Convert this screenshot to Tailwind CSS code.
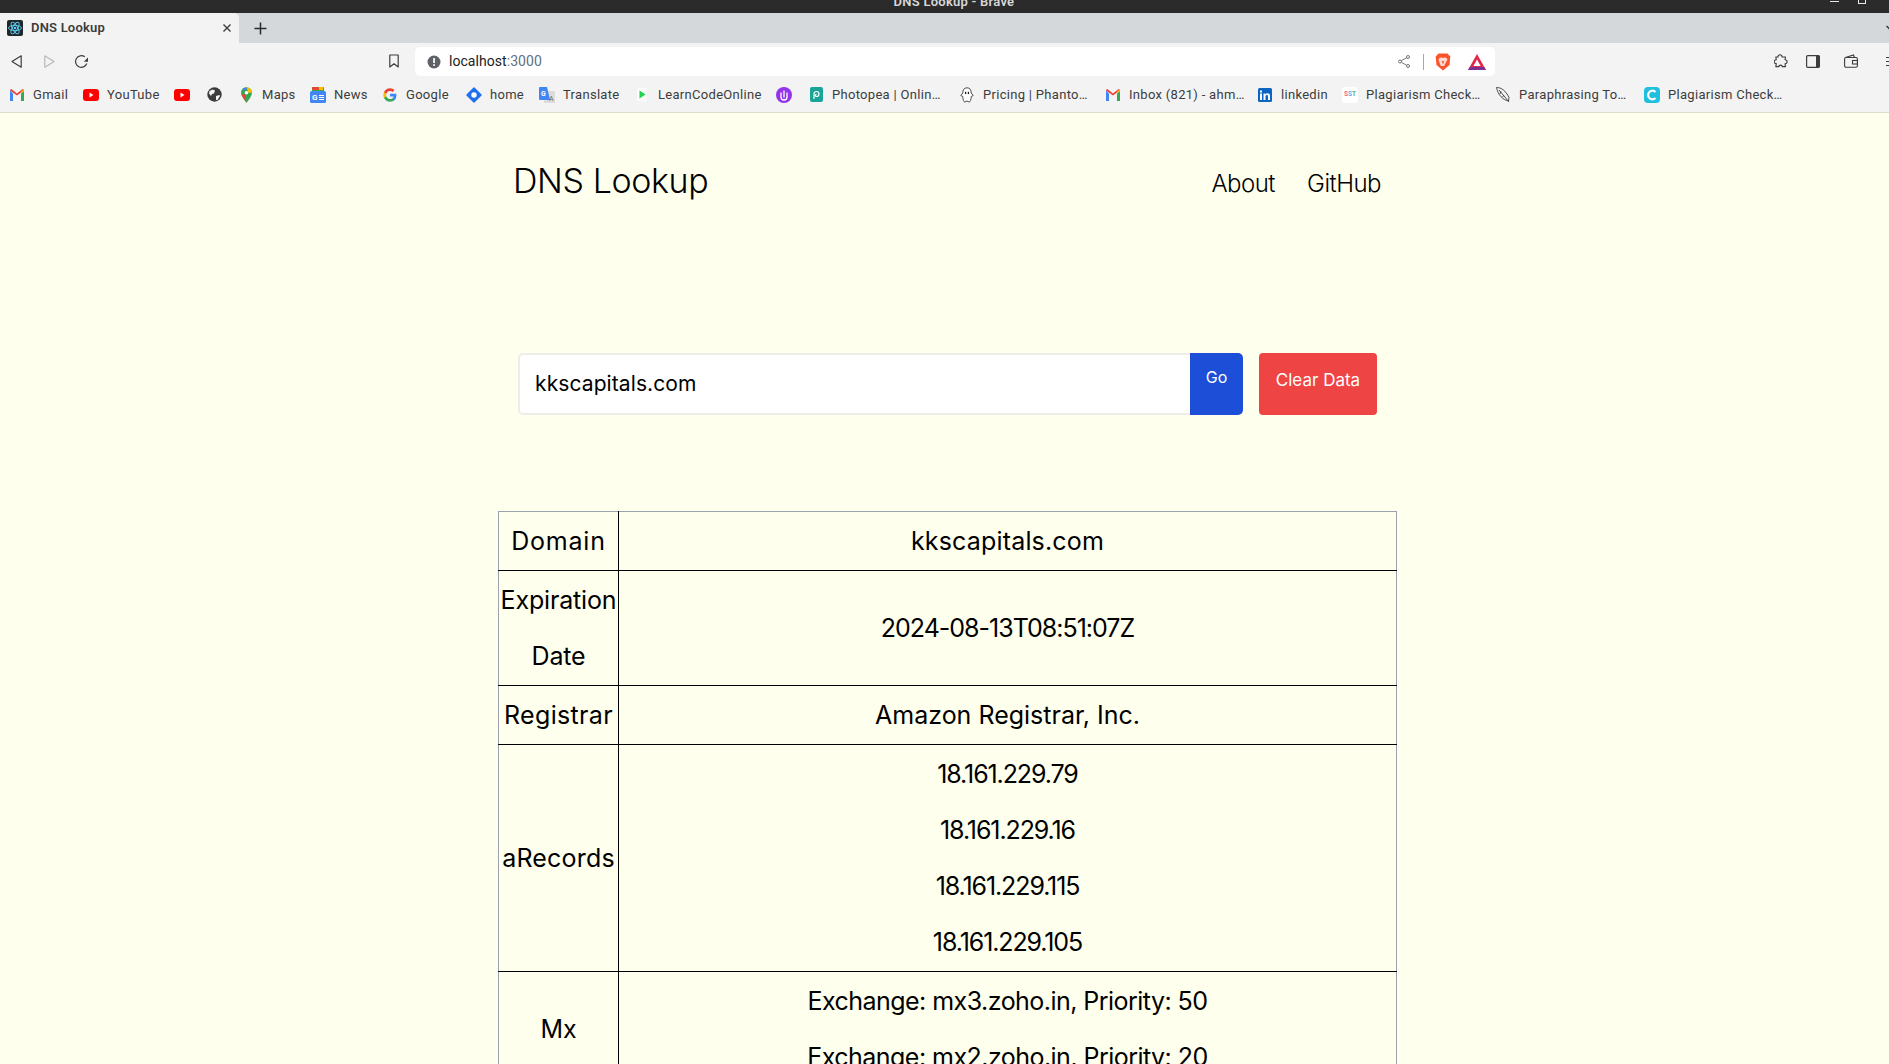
<!DOCTYPE html>
<html lang="en">
<head>
<meta charset="UTF-8">
<title>DNS Lookup</title>
<script src="https://cdn.jsdelivr.net/npm/@tailwindcss/browser@4"></script>
</head>
<body class="h-[1064px] overflow-hidden bg-[#ffffee] font-['Inter',sans-serif] text-black">

<!-- window title bar -->
<div class="relative h-[13px] overflow-hidden bg-[#2b2b2b]">
  <p class="pl-[19px] text-center text-[13px] leading-[3px] font-semibold tracking-[0.25px] text-[#d8d8d8] font-['Roboto',sans-serif]">DNS Lookup - Brave</p>
  <div class="absolute top-[1px] right-[50px] h-[1px] w-[9px] bg-[#e8e8e8]"></div>
  <div class="absolute -top-[5px] right-[23px] h-[9px] w-[8px] border border-[#e8e8e8]"></div>
</div>

<!-- tab strip -->
<div class="flex h-[30px] items-stretch bg-[#d4d8db]">
  <div class="flex w-[239px] items-center rounded-tr-[5px] bg-[#f3f3f3] pl-[7px] pr-[7px]">
    <svg width="16" height="16" viewBox="0 0 16 16"><rect width="16" height="16" rx="2" fill="#20262e"/><g fill="none" stroke="#5ed3f3" stroke-width="0.9"><ellipse cx="8" cy="8" rx="6.5" ry="2.6"/><ellipse cx="8" cy="8" rx="6.5" ry="2.6" transform="rotate(60 8 8)"/><ellipse cx="8" cy="8" rx="6.5" ry="2.6" transform="rotate(120 8 8)"/></g><circle cx="8" cy="8" r="1.3" fill="#5ed3f3"/></svg>
    <span class="ml-[8px] flex-1 text-[13px] font-semibold tracking-[0.2px] text-[#3c3c3c] font-['Roboto',sans-serif]">DNS Lookup</span>
    <svg width="10" height="10" viewBox="0 0 10 10" stroke="#3c3c3c" stroke-width="1.4"><path d="M1.5 1.5l7 7M8.5 1.5l-7 7"/></svg>
  </div>
  <div class="flex w-[43px] items-center justify-center">
    <svg width="13" height="13" viewBox="0 0 13 13" stroke="#2b2b2b" stroke-width="1.5"><path d="M6.500 0.500v12M0.500 6.500h12"/></svg>
  </div>
  <div class="flex flex-1 items-center justify-end pb-[1px]">
    <svg class="-mr-[5px]" width="8" height="6" viewBox="0 0 8 6" fill="none" stroke="#333" stroke-width="1.3"><path d="M0.500 1l3.500 3.500L7.500 1"/></svg>
  </div>
</div>

<!-- toolbar -->
<div class="flex h-[34px] items-start bg-[#f3f3f3] pt-[4px]">
  <div class="flex h-[29px] w-[415px] items-center pb-[1px]">
    <svg class="ml-[11px]" width="11" height="13" viewBox="0 0 11 13" fill="none" stroke="#3c3c3c" stroke-width="1.2" stroke-linejoin="round"><path d="M10.200 0.800L1 6.500l9.200 5.700z"/></svg>
    <svg class="ml-[22px]" width="11" height="13" viewBox="0 0 11 13" fill="none" stroke="#b8b8b8" stroke-width="1.2" stroke-linejoin="round"><path d="M0.800 0.800L10 6.500l-9.200 5.700z"/></svg>
    <svg class="ml-[19px]" width="15" height="15" viewBox="0 0 15 15" fill="none" stroke="#3c3c3c" stroke-width="1.2"><path d="M12.800 9.500A5.800 5.800 0 1 1 10.800 2.800"/><path d="M14 3.500v4.200h-4.200z" fill="#3c3c3c" stroke="none"/></svg>
    <svg class="ml-[300px]" width="10" height="14" viewBox="0 0 10 14" fill="none" stroke="#3c3c3c" stroke-width="1.2" stroke-linejoin="round"><path d="M0.800 1h8.400v12L5 9.800 0.800 13z"/></svg>
  </div>
  <div class="flex h-[29px] w-[1080px] items-center rounded-[5px] bg-white pl-[12px] pr-[9px]">
    <svg width="14" height="14" viewBox="0 0 14 14"><circle cx="7" cy="7" r="6.500" fill="#5f6368"/><rect x="6.200" y="3" width="1.700" height="5" fill="#fff"/><rect x="6.200" y="9.200" width="1.700" height="1.700" fill="#fff"/></svg>
    <span class="ml-[8px] flex-1 text-[14px] tracking-[0.05px] text-[#202124] font-['Roboto',sans-serif]">localhost<span class="text-[#5f7183]">:3000</span></span>
    <svg width="12" height="13" viewBox="0 0 12 13" fill="none" stroke="#666" stroke-width="0.9"><circle cx="10" cy="2" r="1.500"/><circle cx="2" cy="6.500" r="1.500"/><circle cx="10" cy="11" r="1.500"/><path d="M3.300 5.700l5.400-3M3.300 7.300l5.400 3"/></svg>
    <div class="ml-[13px] h-[16px] w-px bg-[#a8a8a8]"></div>
    <svg class="ml-[11px]" width="16" height="18" viewBox="0 0 16 18"><path d="M3.500 0.500h9l2.800 3-.8 8.500L8 17.500 1.500 12 .7 3.500z" fill="#fb542b"/><path d="M4.500 5l2-.5 1.500.5 1.500-.5 2 .5 1 1.500-2.500 4.500-.8 2h-3.400l-.8-2L3.500 6.500z" fill="#fff" opacity="0.8"/><path d="M6.500 7.500l1.500 1 1.500-1-1.500 4z" fill="#fb542b"/></svg>
    <svg class="ml-[17px]" width="18" height="16" viewBox="0 0 18 16"><path d="M9 0l9 16H0z" fill="#e0294a"/><path d="M0 16l1.800-3h14.400l1.800 3z" fill="#7b3294"/><path d="M9 5.500l3.600 6.500H5.400z" fill="#fff"/></svg>
  </div>
  <div class="flex h-[29px] flex-1 items-center overflow-hidden pb-[1px]">
    <svg class="ml-[279px] shrink-0" width="14" height="14" viewBox="0 0 14 14" fill="none" stroke="#3c3c3c" stroke-width="1.100" stroke-linejoin="round"><path d="M4 3c-.3-3 4.300-3 4 0h3.500l-.5 2.800c2.800-.3 2.800 4.200 0 4l.5 2.800H8.200c.3-2-3.500-2-3.200 0H1.800l.5-3c-2.800.3-2.800-4 0-3.800L1.800 3z"/></svg>
    <svg class="ml-[18px] shrink-0" width="14" height="13" viewBox="0 0 14 13"><rect x="0.600" y="0.600" width="12.800" height="11.800" rx="1.200" fill="none" stroke="#3c3c3c" stroke-width="1.200"/><rect x="10" y="0.600" width="3.500" height="11.800" fill="#3c3c3c"/></svg>
    <svg class="ml-[24px] shrink-0" width="14" height="14" viewBox="0 0 14 14" fill="none" stroke="#3c3c3c" stroke-width="1.100"><path d="M1.500 3.500L9.500 1l1 2.500"/><rect x="0.600" y="3.500" width="12.800" height="9.800" rx="1.500"/><rect x="8.500" y="6.500" width="5" height="3.500"/></svg>
    <div class="ml-[28px] flex shrink-0 flex-col gap-[3px]"><i class="h-[1px] w-[5px] bg-[#3c3c3c]"></i><i class="h-[1px] w-[5px] bg-[#3c3c3c]"></i><i class="h-[1px] w-[5px] bg-[#3c3c3c]"></i></div>
  </div>
</div>

<!-- bookmarks -->
<div class="flex h-[36px] items-center overflow-hidden whitespace-nowrap border-b border-[#dcdcd0] bg-[#f3f3f3] pl-[10px] text-[13px] tracking-[0.3px] text-[#3c3c3c] font-['Roboto',sans-serif]">
  <a class="flex w-[73px] shrink-0 items-center gap-[9px]"><svg width="14" height="12" viewBox="0 0 14 12"><path d="M0 1.500C0 .5 1.200 0 2 .6L7 4.500 12 .6c.8-.6 2-.1 2 .9L7 6.500z" fill="#ea4335"/><path d="M0 1.500V12h3V4.500z" fill="#4285f4"/><path d="M14 1.500V12h-3V4.500z" fill="#34a853"/><path d="M11 2.300L14 .8v1.500L11 4.500z" fill="#fbbc04"/></svg>Gmail</a>
  <a class="flex w-[91px] shrink-0 items-center gap-[8px]"><svg width="16" height="12" viewBox="0 0 16 12"><rect width="16" height="12" rx="3" fill="#f00"/><path d="M6.500 3.500l4 2.500-4 2.500z" fill="#fff"/></svg>YouTube</a>
  <a class="flex w-[33px] shrink-0 items-center"><svg width="16" height="12" viewBox="0 0 16 12"><rect width="16" height="12" rx="3" fill="#f00"/><path d="M6.500 3.500l4 2.500-4 2.500z" fill="#fff"/></svg></a>
  <a class="flex w-[34px] shrink-0 items-center"><svg width="15" height="15" viewBox="0 0 15 15"><circle cx="7.500" cy="7.500" r="7.200" fill="#3c3c3c"/><path d="M2.500 4l3-1.500 2.500 1-1 3-2 .5-1 2-2-2.500zM9 9l3.500-1 .5 1-2.500 4L9 13z" fill="#f3f3f3"/></svg></a>
  <a class="flex w-[69px] shrink-0 items-center gap-[10px]"><svg width="11" height="16" viewBox="0 0 12 17"><path d="M6 0a6 6 0 0 1 6 6c0 4-6 11-6 11S0 10 0 6a6 6 0 0 1 6-6z" fill="#34a853"/><path d="M1.300 2.200A6 6 0 0 1 6 0l0 4z" fill="#4285f4"/><path d="M6 0a6 6 0 0 1 6 6L8 6z" fill="#fbbc04"/><circle cx="6" cy="6" r="2" fill="#fff"/><path d="M.4 8.200L4.300 7.500 6 17z" fill="#ea4335"/></svg>Maps</a>
  <a class="flex w-[73px] shrink-0 items-center gap-[8px]"><svg width="16" height="16" viewBox="0 0 16 16"><rect x="2" y="0" width="12" height="6" rx="1" fill="#34a853"/><rect x="2" y="0" width="7" height="3" rx="1" fill="#ea4335"/><rect x="9" y="0" width="4" height="3" fill="#fbbc04"/><rect y="4" width="16" height="12" rx="1.500" fill="#4285f4"/><text x="2" y="13" font-size="8" font-weight="700" fill="#fff" font-family="Roboto">G</text><path d="M9 8.500h5M9 10.500h5M9 12.500h5" stroke="#fff"/></svg>News</a>
  <a class="flex w-[83px] shrink-0 items-center gap-[9px]"><svg width="14" height="14" viewBox="0 0 48 48"><path fill="#4285f4" d="M46 24.500c0-1.600-.1-3.100-.4-4.500H24v9h12.300c-.5 2.900-2.100 5.300-4.500 6.900v5.800h7.300c4.300-4 6.900-9.800 6.900-17.200z"/><path fill="#34a853" d="M24 47c6.100 0 11.300-2 15.100-5.500l-7.300-5.800c-2 1.400-4.700 2.200-7.800 2.200-5.900 0-11-4-12.800-9.400H3.600v5.900C7.300 42 15 47 24 47z"/><path fill="#fbbc05" d="M11.200 28.500c-.5-1.400-.7-2.900-.7-4.500s.3-3.100.7-4.500v-5.900H3.600C2 16.700 1 20.200 1 24s.9 7.300 2.600 10.400z"/><path fill="#ea4335" d="M24 10.100c3.400 0 6.400 1.200 8.800 3.400l6.500-6.500C35.300 3.400 30.100 1 24 1 15 1 7.300 6 3.600 13.600l7.600 5.900C13 14.100 18.100 10.100 24 10.100z"/></svg>Google</a>
  <a class="flex w-[73px] shrink-0 items-center gap-[8px]"><svg width="16" height="16" viewBox="0 0 16 16"><path d="M8 1l7 7-7 7-7-7z" fill="#1f6fee" stroke="#1f6fee" stroke-width="1.500" stroke-linejoin="round"/><circle cx="8" cy="8" r="2.700" fill="#fff"/></svg>home</a>
  <a class="flex w-[98px] shrink-0 items-center gap-[8px]"><svg width="16" height="16" viewBox="0 0 16 16"><rect x="5" y="4" width="11" height="12" fill="#dcdcdc"/><path d="M0 1a1 1 0 0 1 1-1h7l3 13H1a1 1 0 0 1-1-1z" fill="#4285f4"/><text x="2" y="9" font-size="7" font-weight="700" fill="#fff" font-family="Roboto">G</text><text x="10" y="14" font-size="7" fill="#666" font-family="Roboto">A</text></svg>Translate</a>
  <a class="flex w-[139px] shrink-0 items-center gap-[11px]"><svg width="10" height="13" viewBox="0 0 10 13"><rect width="10" height="13" fill="#fafafa"/><path d="M2.500 2.500l6 4-6 4z" fill="#22d34c"/></svg>LearnCodeOnline</a>
  <a class="flex w-[34px] shrink-0 items-center"><svg width="16" height="16" viewBox="0 0 16 16"><circle cx="8" cy="8" r="8" fill="#9333ea"/><path d="M5 5.500V10a3 3 0 0 0 6 0V5.500M8 3.500v7" fill="none" stroke="#fff" stroke-width="1.300"/></svg></a>
  <a class="flex w-[150px] shrink-0 items-center gap-[9px]"><svg width="13" height="15" viewBox="0 0 13 15"><rect width="13" height="15" rx="2" fill="#18a497"/><path d="M4 12V7a2.500 2.500 0 1 1 2.500 2.500 1 1 0 0 1 0-2.200" fill="none" stroke="#fff" stroke-width="1.200"/></svg>Photopea | Onlin…</a>
  <a class="flex w-[146px] shrink-0 items-center gap-[9px]"><svg width="14" height="16" viewBox="0 0 14 16"><path d="M7 .8C4 .8 2.800 3 2.800 6L.8 8.500l2 1c0 3 1 5.500 2 5.500L7 14l2.200 1c1 0 2-2.500 2-5.500l2-1L11.200 6C11.200 3 10 .8 7 .8z" fill="#fff" stroke="#3c3c3c" stroke-width="0.900"/><rect x="5" y="4.800" width="1.300" height="2.300" fill="#222"/><rect x="7.800" y="4.800" width="1.300" height="2.300" fill="#222"/></svg>Pricing | Phanto…</a>
  <a class="flex w-[152px] shrink-0 items-center gap-[9px]"><svg width="14" height="12" viewBox="0 0 14 12"><path d="M0 1.500C0 .5 1.200 0 2 .6L7 4.500 12 .6c.8-.6 2-.1 2 .9L7 6.500z" fill="#ea4335"/><path d="M0 1.500V12h3V4.500z" fill="#4285f4"/><path d="M14 1.500V12h-3V4.500z" fill="#34a853"/><path d="M11 2.300L14 .8v1.500L11 4.500z" fill="#fbbc04"/></svg>Inbox (821) - ahm…</a>
  <a class="flex w-[84px] shrink-0 items-center gap-[9px]"><svg width="14" height="14" viewBox="0 0 14 14"><rect width="14" height="14" rx="1.500" fill="#0a66c2"/><rect x="2" y="5.500" width="2" height="6.500" fill="#fff"/><rect x="2" y="2.500" width="2" height="2" fill="#fff"/><path d="M5.500 5.500h2v1c.5-.8 1.300-1.200 2.200-1.200 1.600 0 2.300 1 2.300 2.700v4h-2V8.500c0-.9-.4-1.400-1.100-1.400-.8 0-1.400.6-1.400 1.500V12h-2z" fill="#fff"/></svg>linkedin</a>
  <a class="flex w-[154px] shrink-0 items-center gap-[8px]"><span class="flex h-[16px] w-[16px] items-center justify-center rounded-[3px] bg-white text-[6.500px] font-bold tracking-normal"><span class="text-[#ef6a6a]">S</span><span class="text-[#6aa5ef]">S</span><span class="text-[#5fb58a]">T</span></span>Plagiarism Check…</a>
  <a class="flex w-[148px] shrink-0 items-center gap-[9px]"><svg width="14" height="16" viewBox="0 0 14 16" fill="none" stroke="#3c3c3c" stroke-width="0.900"><path d="M.5 .5c5 0 9 3 12.500 10l-.5 3.500C7 13 2 8 .5 .5zM3 3l10 12M5 4.500L4 7M8 8l-1.500 2"/></svg>Paraphrasing To…</a>
  <a class="flex w-[160px] shrink-0 items-center gap-[8px]"><svg width="16" height="16" viewBox="0 0 16 16"><rect width="16" height="16" rx="4" fill="#1fbfe0"/><path d="M11.500 5A4.300 4.300 0 1 0 11.500 11" fill="none" stroke="#fff" stroke-width="2.200"/></svg>Plagiarism Check…</a>
</div>

<!-- page -->
<div class="ml-[498px] w-[899px]">
  <header class="flex items-center justify-between pl-[15px] pr-[16px] pt-[48px]">
    <h1 class="text-[34px] leading-[40px] font-light tracking-[-0.4px]">DNS Lookup</h1>
    <nav class="flex gap-[32px] pt-[6px] text-[24px] leading-[32px] font-light tracking-[-0.5px]"><a>About</a><a>GitHub</a></nav>
  </header>

  <form class="mt-[152px] flex pl-[20px]">
    <div class="flex h-[62px] w-[672px] items-center rounded-l-[5px] border-2 border-r-0 border-[#eeeee6] bg-white pl-[15px] text-[21px] tracking-[0.1px]">kkscapitals.com</div>
    <button type="button" class="flex h-[62px] w-[53px] justify-center rounded-r-[5px] bg-[#1d4ed8] pt-[12px] text-[16px] text-white">Go</button>
    <button type="button" class="ml-[16px] flex h-[62px] w-[118px] justify-center rounded-[4px] bg-[#ef4444] pt-[15px] text-[17px] text-white">Clear Data</button>
  </form>

  <table class="mt-[96px] w-[899px] border-collapse border border-[#9ca3af] text-center text-[25px] leading-[56px]">
    <tbody>
      <tr class="border-b border-black"><td class="w-[120px] border-r border-black p-px tracking-[0.77px]">Domain</td><td class="p-px tracking-[0.17px]">kkscapitals.com</td></tr>
      <tr class="border-b border-black"><td class="border-r border-black p-px tracking-[-0.17px]">Expiration Date</td><td class="p-px tracking-[-1px]">2024-08-13T08:51:07Z</td></tr>
      <tr class="border-b border-black"><td class="border-r border-black p-px tracking-[0.33px]">Registrar</td><td class="p-px">Amazon Registrar, Inc.</td></tr>
      <tr class="border-b border-black"><td class="border-r border-black p-px tracking-[0.2px]">aRecords</td><td class="p-px tracking-[-1.1px]"><p>18.161.229.79</p><p>18.161.229.16</p><p>18.161.229.115</p><p>18.161.229.105</p></td></tr>
      <tr><td class="border-r border-black p-px">Mx</td><td class="p-px tracking-[-0.54px]"><p>Exchange: mx3.zoho.in, Priority: 50</p><p>Exchange: mx2.zoho.in, Priority: 20</p></td></tr>
    </tbody>
  </table>
</div>
</body>
</html>
